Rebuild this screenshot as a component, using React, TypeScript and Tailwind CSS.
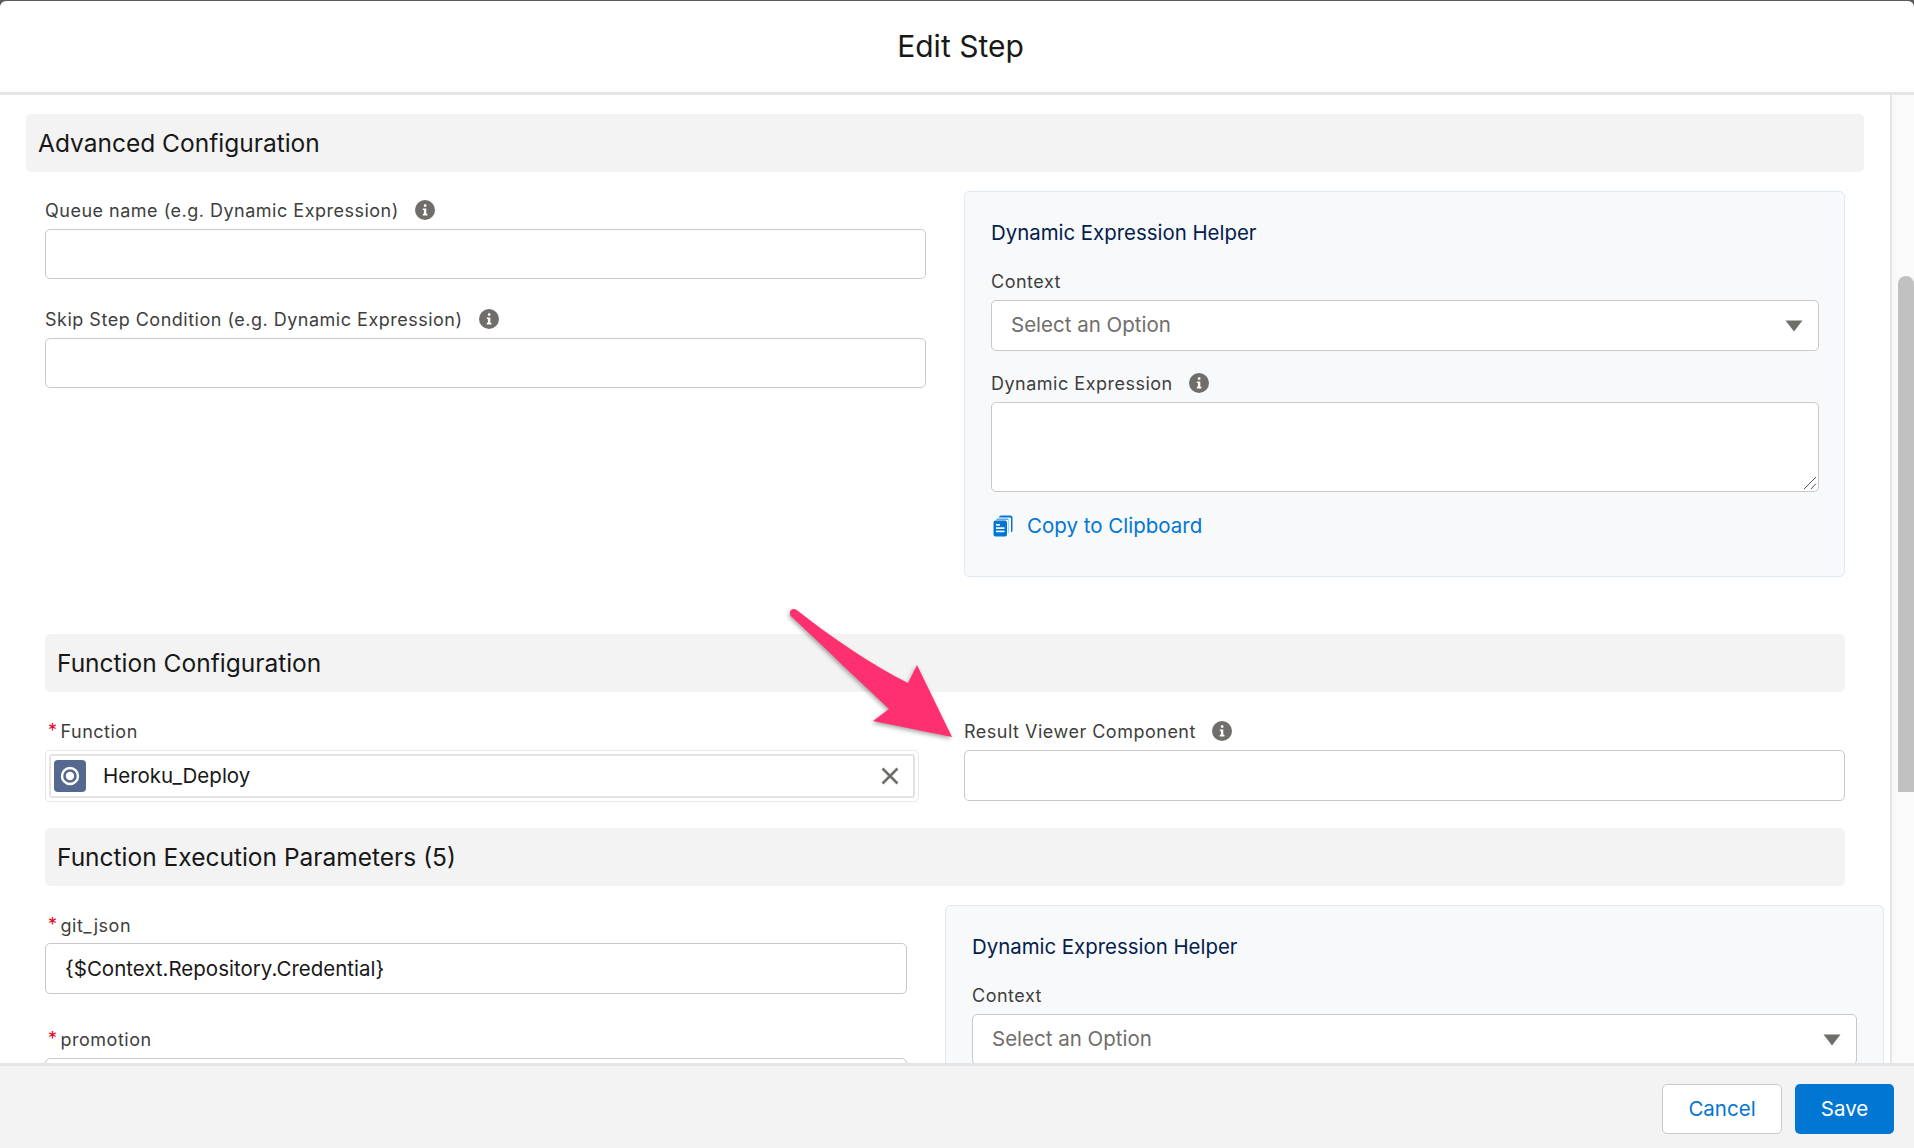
import React from "react";

const font = { fontFamily: "Inter, 'Liberation Sans', sans-serif" };

function Info() {
  return (
    <svg width="20" height="20" viewBox="0 0 20 20" className="shrink-0">
      <circle cx="10" cy="10" r="10" fill="#706e6b" />
      <rect x="8.9" y="4.3" width="2.5" height="2.5" rx="0.6" fill="#fff" />
      <path d="M7.8 8.4h3.5v5.4h1.1v1.7H7.8v-1.7h1.1v-3.7H7.8z" fill="#fff" />
    </svg>
  );
}

function Caret() {
  return (
    <svg width="18" height="12" viewBox="0 0 18 12" className="shrink-0">
      <path d="M0.5 0.5h17L9 11.5z" fill="#706e6b" />
    </svg>
  );
}

function CopyIcon() {
  return (
    <svg width="20" height="22" viewBox="0 0 20 22" className="shrink-0">
      <path d="M6 2.5a2 2 0 0 1 2-2h9a2.500 2.500 0 0 1 2.500 2.500v12.500a2 2 0 0 1-1.500 1.900V3.500a1 1 0 0 0-1-1H6z" fill="#0176d3" />
      <path d="M3.500 3.500h11.500V4h.5v14H15V5H3.500z" fill="#0176d3" opacity="0.6" />
      <rect x="0.500" y="5.500" width="13.500" height="16" rx="2" fill="#0176d3" />
      <rect x="3" y="9" width="4" height="1.600" fill="#fff" />
      <rect x="3" y="12.300" width="8.500" height="1.600" fill="#fff" />
      <rect x="3" y="15.600" width="8.500" height="1.600" fill="#fff" />
    </svg>
  );
}

function Label({ text, required, info }: { text: string; required?: boolean; info?: boolean }) {
  return (
    <div className="flex items-center h-[24px] pb-[2px] text-[18px] text-[#3e3e3c] tracking-[0.5px] whitespace-nowrap">
      {required && <span className="text-[#ea001e] ml-[3px] mr-[3px] leading-none">*</span>}
      <span>{text}</span>
      {info && (
        <span className="ml-[16px]">
          <Info />
        </span>
      )}
    </div>
  );
}

function TextInput({ value = "", className = "h-[50px]" }: { value?: string; className?: string }) {
  return (
    <input
      readOnly
      value={value}
      className={`block w-full bg-white border border-[#c9c9c9] rounded-[5px] px-[19px] text-[20.500px] text-[#181818] outline-none ${className}`}
    />
  );
}

function SectionHeader({ text, className = "" }: { text: string; className?: string }) {
  return (
    <div className={`h-[58px] bg-[#f3f3f3] rounded-[5px] flex items-center px-[12px] text-[24.500px] text-[#181818] ${className}`}>
      {text}
    </div>
  );
}

function SelectBox() {
  return (
    <div className="mt-[6px] h-[51px] bg-white border border-[#c9c9c9] rounded-[5px] flex items-center justify-between pl-[19px] pr-[15px] text-[20.500px] text-[#706e6b]">
      <span>Select an Option</span>
      <Caret />
    </div>
  );
}

function Arrow() {
  return (
    <svg width="1914" height="1148" viewBox="0 0 1914 1148" className="absolute left-0 top-0 pointer-events-none" style={{ filter: "drop-shadow(-1px 2px 2px rgba(0,0,0,0.35))" }}>
      <path
        d="M791 610 C789 613 790 616 793 618 C825 648 860 682 889 709 L873 721 L952 737 L917 665 L908 683 C870 664 830 636 798 611 C796 609 793 608 791 610 Z"
        fill="#ff3070"
      />
    </svg>
  );
}

export default function App() {
  return (
    <div style={font} className="relative w-[1914px] h-[1148px] overflow-hidden bg-[#5a5a5a] pt-px flex flex-col">
      <header className="h-[94px] shrink-0 bg-white rounded-t-[6px] border-b-[3px] border-[#e5e5e5] flex items-center justify-center pl-[7px] text-[30px] text-[#181818]">
        Edit Step
      </header>

      <div className="flex h-[968px] shrink-0">
        <main className="w-[1892px] shrink-0 bg-white border-r-[2px] border-[#e5e5e5] overflow-hidden pt-[19px]">
          <SectionHeader text="Advanced Configuration" className="ml-[26px] mr-[26px]" />

          <div className="flex mt-[19px] pl-[45px] pr-[45px] gap-[38px]">
            <div className="w-[881px] shrink-0 pt-[8px]">
              <Label text="Queue name (e.g. Dynamic Expression)" info />
              <div className="mt-[6px]">
                <TextInput />
              </div>
              <div className="mt-[29px]">
                <Label text="Skip Step Condition (e.g. Dynamic Expression)" info />
              </div>
              <div className="mt-[6px]">
                <TextInput />
              </div>
            </div>

            <section className="w-[881px] h-[386px] shrink-0 bg-[#f8f9fb] border border-[#dfe9f5] rounded-[5px] pl-[26px] pr-[25px] pt-[28px]">
              <h3 className="text-[20.400px] leading-[26px] text-[#04204d]">Dynamic Expression Helper</h3>
              <div className="mt-[24px]">
                <Label text="Context" />
              </div>
              <SelectBox />
              <div className="mt-[21px]">
                <Label text="Dynamic Expression" info />
              </div>
              <div className="relative mt-[6px]">
                <textarea readOnly className="block w-full h-[90px] bg-white border border-[#c9c9c9] rounded-[5px] outline-none resize-none" />
                <svg width="14" height="14" viewBox="0 0 14 14" className="absolute right-[2px] bottom-[2px]">
                  <path d="M1 13L13 1M8 13L13 7.500" stroke="#555" strokeWidth="1" fill="none" />
                </svg>
              </div>
              <div className="flex items-center mt-[21px] h-[26px] pl-[2px] text-[20.500px] text-[#0176d3]">
                <CopyIcon />
                <span className="ml-[14px]">Copy to Clipboard</span>
              </div>
            </section>
          </div>

          <SectionHeader text="Function Configuration" className="ml-[45px] mr-[45px] mt-[57px]" />

          <div className="flex mt-[28px] pl-[45px] pr-[45px] gap-[45px]">
            <div className="w-[874px] shrink-0">
              <Label text="Function" required />
              <div className="mt-[6px] h-[52px] border border-[#e9e9e9] rounded-[5px] p-[3px]">
                <div className="h-full border-[2px] border-[#e3e3e3] rounded-[3px] flex items-center pl-[3px] pr-[14px] text-[20.500px] text-[#181818]">
                  <span className="w-[32px] h-[32px] rounded-[4px] bg-[#54698d] flex items-center justify-center shrink-0">
                    <svg width="20" height="20" viewBox="0 0 20 20">
                      <circle cx="10" cy="10" r="8" fill="none" stroke="#fff" strokeWidth="2.400" />
                      <circle cx="10" cy="10" r="4.200" fill="#fff" />
                    </svg>
                  </span>
                  <span className="ml-[17px] flex-1">Heroku_Deploy</span>
                  <svg width="18" height="18" viewBox="0 0 18 18" className="shrink-0">
                    <path d="M1.500 1.500l15 15M16.500 1.500l-15 15" stroke="#706e6b" strokeWidth="2.600" fill="none" />
                  </svg>
                </div>
              </div>
            </div>
            <div className="w-[881px] shrink-0">
              <Label text="Result Viewer Component" info />
              <div className="mt-[6px]">
                <TextInput className="h-[51px]" />
              </div>
            </div>
          </div>

          <SectionHeader text="Function Execution Parameters (5)" className="ml-[45px] mr-[45px] mt-[26px]" />

          <div className="flex mt-[19px] pl-[45px] pr-[7px] gap-[38px]">
            <div className="w-[862px] shrink-0 pt-[9px]">
              <Label text="git_json" required />
              <div className="mt-[5px]">
                <TextInput value="{$Context.Repository.Credential}" className="h-[51px]" />
              </div>
              <div className="mt-[34px]">
                <Label text="promotion" required />
              </div>
              <div className="mt-[6px]">
                <TextInput />
              </div>
            </div>
            <section className="w-[939px] h-[386px] shrink-0 bg-[#f8f9fb] border border-[#dfe9f5] rounded-[5px] px-[26px] pt-[28px]">
              <h3 className="text-[20.400px] leading-[26px] text-[#04204d]">Dynamic Expression Helper</h3>
              <div className="mt-[24px]">
                <Label text="Context" />
              </div>
              <SelectBox />
            </section>
          </div>
        </main>

        <div className="flex-1 bg-[#fafafa] pt-[181px] pl-[6px]">
          <div className="h-[516px] bg-[#c1c1c1] rounded-t-[8px]" />
        </div>
      </div>

      <footer className="flex-1 bg-[#f3f3f3] border-t-[3px] border-[#e5e5e5] flex items-center justify-end gap-[13px] pr-[20px] pt-[4px] text-[20.500px]">
        <button className="w-[120px] h-[50px] bg-white border border-[#c9c9c9] rounded-[5px] text-[#0176d3]">Cancel</button>
        <button className="w-[99px] h-[50px] bg-[#0176d3] rounded-[5px] text-white">Save</button>
      </footer>

      <Arrow />
    </div>
  );
}
